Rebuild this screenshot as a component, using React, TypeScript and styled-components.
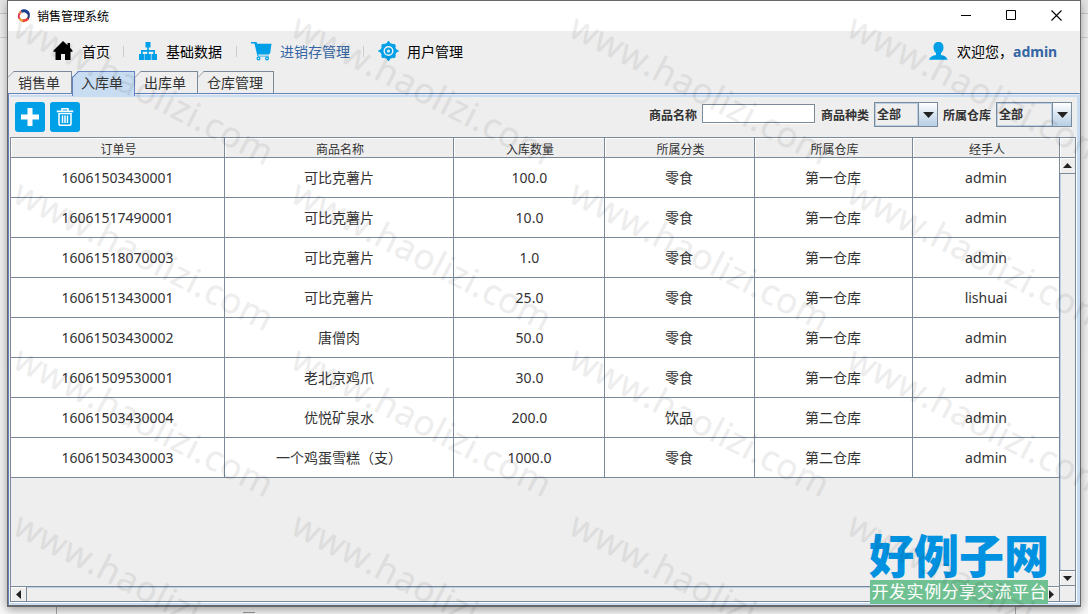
import React from 'react';
import styled, { createGlobalStyle } from 'styled-components';

const Global = createGlobalStyle`
  * { box-sizing: border-box; }
  body { margin: 0; overflow: hidden; }
`;

const line = '#7a8a99';
const accent = '#00a0e9';
const paleBlue = '#c8ddf2';

const Desktop = styled.div`
  position: relative;
  width: 1088px;
  height: 614px;
  padding: 0 7px 0 7px;
  overflow: hidden;
  background:
    linear-gradient(#aaa, #aaa) 56px 606px / 1px 8px no-repeat,
    linear-gradient(#aaa, #aaa) 1015px 606px / 1px 8px no-repeat,
    linear-gradient(#999, #999) 243px 612px / 12px 1px no-repeat,
    linear-gradient(#e2e2e4 0, #e9e9e9 13px, #c4c4c4 13px, #c4c4c4 14px, #ededed 14px, #ededed 37px, #d0d0d0 37px, #d0d0d0 38px, #f0f0f0 38px, #f2f2f2 600px, #fafafa 614px);
  font-family: "Noto Sans", "Noto Sans CJK SC", sans-serif;
  color: #333;
`;

const Frame = styled.div`
  width: 1074px;
  height: 607px;
  border: 1px solid #696969;
  border-bottom-width: 2px;
  background: #eee;
  display: flex;
  flex-direction: column;
  box-shadow: 0 3px 9px rgba(0, 0, 0, 0.35);
`;

const TitleBar = styled.header`
  height: 30px;
  flex: none;
  display: flex;
  align-items: center;
  background: #fff;
  padding: 0 18px 0 9px;
  color: #000;
  font: 12px/30px "Noto Sans CJK SC", sans-serif;
  & > svg:first-child { margin-right: 6px; }
`;

const WindowButtons = styled.div`
  margin-left: auto;
  display: flex;
  gap: 34px;
  padding-bottom: 1px;
`;

const Menu = styled.nav`
  height: 40px;
  flex: none;
  display: flex;
  align-items: center;
  padding: 0 23px 1px 44px;
  color: #000;
  svg { margin-top: 1px; }
`;

const MenuItem = styled.div<{ $active?: boolean; $w: number }>`
  width: ${p => p.$w}px;
  display: flex;
  align-items: center;
  gap: 8px;
  flex: none;
  color: ${p => (p.$active ? '#3465a4' : '#000')};
  font: 14px/20px "Noto Sans CJK SC", sans-serif;
  white-space: nowrap;
`;

const Divider = styled.i`
  width: 1px;
  height: 11px;
  flex: none;
  background: #ccc;
  margin: 2px 14px 0 0;
`;

const User = styled.div`
  margin-left: auto;
  display: flex;
  align-items: center;
  font: 14px/20px "Noto Sans CJK SC", sans-serif;
  svg { margin-right: 8px; }
  b { font: bold 14px/20px "Noto Sans", sans-serif; color: #3465a4; width: 44px; padding-top: 2px; }
  span { width: 56px; white-space: nowrap; }
`;

const Tabs = styled.div`
  height: 22px;
  flex: none;
  display: flex;
`;

const Tab = styled.div<{ $w: number; $active?: boolean }>`
  position: relative;
  width: ${p => p.$w}px;
  height: ${p => (p.$active ? 25 : 22)}px;
  border: 1px solid ${p => (p.$active ? '#6382bf' : line)};
  border-bottom: 0;
  border-left: ${p => (p.$active ? '1px solid #6382bf' : '0')};
  background: ${p => (p.$active ? paleBlue : '#eee')};
  clip-path: polygon(6px 0, 100% 0, 100% 100%, 0 100%, 0 6px);
  padding-left: ${p => (p.$active ? 8 : 9)}px;
  z-index: ${p => (p.$active ? 2 : 0)};
  font: 14px/20px "Noto Sans CJK SC", sans-serif;
  white-space: nowrap;
  &:first-child { padding-left: 10px; }
  &::before {
    content: "";
    position: absolute;
    left: -2px;
    top: 2px;
    width: 9px;
    height: 1px;
    background: ${p => (p.$active ? '#6382bf' : line)};
    transform: rotate(-45deg);
  }
`;

const Content = styled.main`
  flex: 1;
  min-height: 0;
  border: 1px solid #6382bf;
  border-right-color: ${paleBlue};
  border-bottom: 0;
  padding: 1px 0 0 1px;
  display: flex;
  flex-direction: column;
`;

const Inner = styled.div`
  flex: 1;
  border-top: 2px solid ${paleBlue};
  border-right: 2px solid ${paleBlue};
  border-bottom: 2px solid ${paleBlue};
  display: flex;
  flex-direction: column;
`;

const Toolbar = styled.div`
  height: 40px;
  flex: none;
  display: flex;
  align-items: center;
  padding: 0 5px 0 5px;
`;

const ActionButton = styled.button`
  width: 30px;
  height: 30px;
  padding: 0;
  margin-right: 5px;
  border: 0;
  border-radius: 3px;
  background: ${accent};
  display: grid;
  place-items: center;
`;

const Filters = styled.div`
  margin-left: auto;
  display: flex;
  align-items: center;
  margin-top: -5px;
  font: bold 12px/20px "Noto Sans CJK SC", sans-serif;
`;

const Label = styled.label`
  width: 48px;
  margin-right: 5px;
  white-space: nowrap;
`;

const Input = styled.input`
  width: 113px;
  height: 19px;
  margin: -2px 6px 0 0;
  border: 1px solid ${line};
  background: #fff;
  outline: 0;
  box-shadow: 0 1px #fff;
`;

const Select = styled.div<{ $w: number; $gap?: number }>`
  width: ${p => p.$w}px;
  height: 25px;
  margin-right: ${p => p.$gap ?? 0}px;
  border: 1px solid ${line};
  display: flex;
  justify-content: space-between;
  span {
    flex: 1;
    border: 1px solid #b8cfe5;
    padding-left: 1px;
    font: bold 12px/20px "Noto Sans CJK SC", sans-serif;
  }
`;

const Arrow = styled.div`
  width: 19px;
  border-left: 1px solid ${line};
  background: linear-gradient(#fff, #dfe9f3 40%, #b8cfe5);
  display: grid;
  place-items: center;
`;

const ScrollArea = styled.div`
  width: 1066px;
  height: 465px;
  border: 1px solid ${line};
  box-shadow: 1px 1px #fff;
  display: flex;
  flex-direction: column;
`;

const columns = '214px 229px 151px 150px 158px 147px 15px';

const HeaderRow = styled.div`
  display: grid;
  grid-template-columns: ${columns};
  grid-template-rows: 20px;
  height: 20px;
  flex: none;
`;

const HeaderCell = styled.div`
  height: 20px;
  border-right: 1px solid ${line};
  border-bottom: 1px solid ${line};
  box-shadow: inset 1px 1px #fff;
  padding-left: 2px;
  text-align: center;
  font: 12px/22px "Noto Sans CJK SC", sans-serif;
  &:last-child { border-right: 0; }
`;

const Middle = styled.div`
  flex: 1;
  display: flex;
  min-height: 0;
`;

const Body = styled.div`
  width: 1049px;
  flex: none;
  border-right: 1px solid ${line};
`;

const Row = styled.div`
  display: grid;
  grid-template-columns: 214px 229px 151px 150px 158px 146px;
  height: 40px;
  background: #fff;
  border-bottom: 1px solid ${line};
`;

const Cell = styled.div`
  border-right: 1px solid ${line};
  text-align: center;
  font: 14px/40px "Noto Sans", "Noto Sans CJK SC", sans-serif;
  height: 39px;
  &:last-child { border-right: 0; }
  &:nth-child(3) { padding-left: 1px; }
  &:nth-child(4), &:nth-child(5) { padding-right: 1px; }
`;

const VScroll = styled.div`
  width: 15px;
  display: flex;
  flex-direction: column;
  justify-content: space-between;
  box-shadow: inset 1px 0 #b8cfe5;
`;

const HScroll = styled.div`
  height: 15px;
  flex: none;
  width: 1049px;
  display: flex;
  justify-content: space-between;
  border-top: 1px solid ${line};
  border-right: 1px solid ${line};
  box-shadow: inset 0 1px #b8cfe5;
`;

const ScrollButton = styled.div<{ $edge: 'top' | 'bottom' | 'left' | 'right' }>`
  width: 16px;
  height: 14px;
  display: grid;
  place-items: center;
  background: #eee;
  box-shadow: inset 1px 1px #fff;
  ${p => ({ top: 'height: 16px; width: 15px; border-bottom', bottom: 'height: 16px; width: 15px; border-bottom: 1px solid #7a8a99; border-top', left: 'border-right', right: 'border-left' })[p.$edge]}: 1px solid ${line};
`;

const Watermark = styled.svg`
  position: absolute;
  inset: 0;
  pointer-events: none;
  z-index: 5;
`;

const Brand = styled.div`
  position: absolute;
  left: 866px;
  top: 528px;
  z-index: 4;
`;

const Tri = ({ d, w = 9, h = 9 }: { d: string; w?: number; h?: number }) => (
  <svg width={w} height={h} viewBox={`0 0 ${w} ${h}`} display="block"><path d={d} fill="#222" /></svg>
);

const rows = [
  ['16061503430001', '可比克薯片', '100.0', '零食', '第一仓库', 'admin'],
  ['16061517490001', '可比克薯片', '10.0', '零食', '第一仓库', 'admin'],
  ['16061518070003', '可比克薯片', '1.0', '零食', '第一仓库', 'admin'],
  ['16061513430001', '可比克薯片', '25.0', '零食', '第一仓库', 'lishuai'],
  ['16061503430002', '唐僧肉', '50.0', '零食', '第一仓库', 'admin'],
  ['16061509530001', '老北京鸡爪', '30.0', '零食', '第一仓库', 'admin'],
  ['16061503430004', '优悦矿泉水', '200.0', '饮品', '第二仓库', 'admin'],
  ['16061503430003', '一个鸡蛋雪糕（支）', '1000.0', '零食', '第二仓库', 'admin'],
];

const marks = [0, 1, 2, 3].flatMap(r => [0, 1, 2, 3].map(c => ({ x: 11 + c * 278, y: 35 + r * 166 })));

export default function App() {
  return (
    <Desktop>
      <Global />
      <Frame>
        <TitleBar>
          <svg width="14" height="14" viewBox="0 0 14 14" fill="none" strokeWidth="2.6">
            <path d="M2.1 5.500A5 5 0 0 1 5 2.200" stroke="#e8825a" />
            <path d="M4.500 2.400C7 .800 10.500 2 11.500 5" stroke="#17408f" strokeWidth="3" />
            <path d="M11.400 4.200C12.300 6.500 11.800 8.500 10.600 10" stroke="#263a73" strokeWidth="2" />
            <path d="M11 9.500C9.800 11.200 7.500 12 5.300 11.600" stroke="#e8433a" strokeWidth="3" />
            <path d="M6 11.900C4 11.500 2.700 10.200 2.200 8.500" stroke="#f6a024" strokeWidth="2" />
            <path d="M2.200 9.500A5 5 0 0 1 2.300 5" stroke="#d52b52" strokeWidth="1.800" />
          </svg>
          <span>销售管理系统</span>
          <WindowButtons>
            <svg width="11" height="11"><path d="M0 5.5h10" stroke="#000" /></svg>
            <svg width="11" height="11"><path d="M.5.5h9v9h-9z" fill="none" stroke="#000" /></svg>
            <svg width="11" height="11"><path d="M.5.5l10 10M10.500.5l-10 10" stroke="#000" strokeWidth="1.1" /></svg>
          </WindowButtons>
        </TitleBar>
        <Menu>
          <MenuItem $w={71}>
            <svg width="22" height="22" viewBox="0 0 22 22"><path d="M11 1l4.500 4.300V3H18v4.800l2.500 2.700v1.200H18.500V20H13v-6H9v6H3.500v-8.300h-2v-1.200z" fill="#000" /></svg>首页
          </MenuItem>
          <Divider />
          <MenuItem $w={98}>
            <svg width="20" height="20" viewBox="0 0 20 20" fill={accent}><path d="M7.500 1h5v5.500h-1.700V9H17v4h2v6h-5.500v-6h1.800v-2.300h-4.500V13h2v6H7v-6h2.200v-2.300H4.700V13h1.800v6H1v-6h2V9h6.200V6.500H7.500z" /></svg>基础数据
          </MenuItem>
          <Divider />
          <MenuItem $w={112} $active>
            <svg width="21" height="20" viewBox="0 0 21 20" fill={accent}><path d="M0 1h5.500l.8 1.700H20.500l-1.300 9.500-1.500 1.200H7l.5 1.300H18v.800H6.500L3.500 2.500H0z" /><circle cx="7.500" cy="17.500" r="1.400" fill="none" stroke={accent} strokeWidth="1.200" /><circle cx="16" cy="17.500" r="1.400" fill="none" stroke={accent} strokeWidth="1.200" /></svg>进销存管理
          </MenuItem>
          <Divider />
          <MenuItem $w={98}>
            <svg width="21" height="22" viewBox="0 0 22 22">
              <circle cx="11" cy="11" r="8.300" fill={accent} />
              <path d="M9.300 3.500L11 .500l1.700 3zM9.300 18.500l1.700 3 1.700-3zM3.500 9.300L.500 11l3 1.700zM18.500 9.300l3 1.700-3 1.700zM4 6.800l.3-2.500 2.500-.3zM15.200 4l2.500.3.3 2.500zM4 15.200l.3 2.500 2.500.3zM18 15.200l-.3 2.500-2.500.3z" fill={accent} stroke={accent} strokeWidth="1" />
              <circle cx="11" cy="11" r="4.500" fill="none" stroke="#eee" strokeWidth="1.500" /><circle cx="11" cy="11" r="1.600" fill="#eee" />
            </svg>用户管理
          </MenuItem>
          <User>
            <svg width="21" height="20" viewBox="0 0 21 20" fill={accent}><path d="M5.500 6.500C5.500 2.800 7.500 1 10.500 1s5 1.800 5 5.500c0 2.500-1 4.500-2.500 5.600V14c3 .500 6 2 6.700 4.800H1C1.700 16 5 14.500 8 14v-1.900C6.500 11 5.500 9 5.500 6.500z" /></svg>
            <span>欢迎您，</span><b>admin</b>
          </User>
        </Menu>
        <Tabs>
          <Tab $w={64}>销售单</Tab>
          <Tab $w={63} $active>入库单</Tab>
          <Tab $w={63}>出库单</Tab>
          <Tab $w={76}>仓库管理</Tab>
        </Tabs>
        <Content>
          <Inner>
            <Toolbar>
              <ActionButton aria-label="添加"><svg width="20" height="20"><path d="M10 1v18M1 10h18" stroke="#fff" strokeWidth="5" /></svg></ActionButton>
              <ActionButton aria-label="删除"><svg width="18" height="20" viewBox="0 0 18 20" fill="none" stroke="#fff" strokeWidth="1.500"><path d="M1.500 5.200V4.200h15v1M6 4V1.800h6V4M3 6.500V16.500q0 1.800 1.800 1.800h8.400q1.800 0 1.800-1.800V6.500zM6.500 8.500v7.500M9 8.500v7.500M11.500 8.500v7.500" /></svg></ActionButton>
              <Filters>
                <Label>商品名称</Label><Input />
                <Label>商品种类</Label>
                <Select $w={64} $gap={5}><span>全部</span><Arrow><Tri w={11} h={6} d="M0 0h11L5.500 6z" /></Arrow></Select>
                <Label>所属仓库</Label>
                <Select $w={76}><span>全部</span><Arrow><Tri w={11} h={6} d="M0 0h11L5.500 6z" /></Arrow></Select>
              </Filters>
            </Toolbar>
            <ScrollArea>
              <HeaderRow>
                {['订单号', '商品名称', '入库数量', '所属分类', '所属仓库', '经手人', ''].map((h, i) => <HeaderCell key={i}>{h}</HeaderCell>)}
              </HeaderRow>
              <Middle>
                <Body>{rows.map(r => <Row key={r[0]}>{r.map((c, i) => <Cell key={i}>{c}</Cell>)}</Row>)}</Body>
                <VScroll>
                  <ScrollButton $edge="top"><Tri w={9} h={5} d="M0 5h9L4.500 0z" /></ScrollButton>
                  <ScrollButton $edge="bottom"><Tri w={9} h={5} d="M0 0h9L4.500 5z" /></ScrollButton>
                </VScroll>
              </Middle>
              <HScroll>
                <ScrollButton $edge="left"><Tri w={5} h={9} d="M5 0v9L0 4.500z" /></ScrollButton>
                <ScrollButton $edge="right"><Tri w={5} h={9} d="M0 0v9L5 4.500z" /></ScrollButton>
              </HScroll>
            </ScrollArea>
          </Inner>
        </Content>
      </Frame>
      <Brand>
        <svg width="186" height="78" viewBox="0 0 186 78" display="block">
          <text x="3" y="45" fontFamily="Noto Sans CJK SC, sans-serif" fontWeight="900" fontSize="46" textLength="180" lengthAdjust="spacingAndGlyphs" fill="#0092e0">好例子网</text>
          <rect x="4" y="52" width="178" height="24" fill="#70c191" />
          <text x="5.500" y="70" fontFamily="Noto Sans CJK SC, sans-serif" fontSize="17" textLength="175" fill="#fff">开发实例分享交流平台</text>
        </svg>
      </Brand>
      <Watermark width="1088" height="614">
        {marks.map(m => (
          <text key={`${m.x}-${m.y}`} transform={`translate(${m.x} ${m.y}) rotate(27.200)`} fontFamily="Open Sans, sans-serif" fontSize="35" textLength="286" fill="#000" stroke="#000" strokeWidth="0.4" opacity="0.066">www.haolizi.com</text>
        ))}
      </Watermark>
    </Desktop>
  );
}
